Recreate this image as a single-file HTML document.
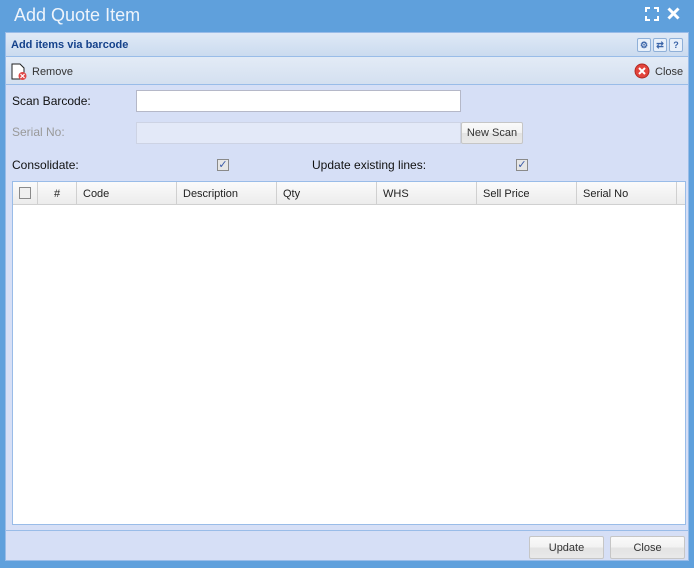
<!DOCTYPE html>
<html><head><style>
*{box-sizing:border-box;margin:0;padding:0}
body{width:694px;height:568px;background:#5fa0dc;font-family:"Liberation Sans",sans-serif;position:relative;overflow:hidden}
.a{position:absolute}
.title{left:14px;top:5px;color:#eef4fb;font-size:18px}
.panel{left:5px;top:32px;width:684px;height:529px;background:#d6dff6;border:1px solid #99bce8}
.ph{left:0;top:0;width:682px;height:24px;background:linear-gradient(#dfe9f6,#cbdbef);border-bottom:1px solid #99bce8}
.tb{left:0;top:24px;width:682px;height:28px;background:linear-gradient(#e3ebf6,#d4e0f0);border-bottom:1px solid #99bce8}
.lbl{font-size:12px;color:#111}
.inp{background:#fff;border:1px solid #b5b8c8}
.btn{border:1px solid #c6c6c6;border-radius:2px;background:linear-gradient(#fafafa 0%,#f2f2f2 50%,#e3e3e3 51%,#e9e9e9);font-size:11px;color:#333;text-align:center}
.cb{width:12px;height:12px;border:1px solid #8a8a8a;background:#e6e6e6;font-size:11px;line-height:10px;text-align:center;color:#3a5aa8}
.grid{left:6px;top:148px;width:674px;height:344px;background:#fff;border:1px solid #99bce8}
.gh{left:0;top:0;width:672px;height:23px;background:linear-gradient(#fbfbfb,#ececec);border-bottom:1px solid #d0d0d0}
.c{position:absolute;top:0;height:22px;border-right:1px solid #d0d0d0;font-size:11px;line-height:24px;padding-left:6px;color:#222}
.ti{width:14px;height:14px;border:1px solid #8fb0d8;border-radius:2px;background:#e8f0fa;font-size:9px;line-height:12px;text-align:center;color:#3a64a8;font-weight:bold;top:5px}
</style></head><body>
<div class="a title">Add Quote Item</div>
<svg class="a" style="left:645px;top:7px" width="14" height="14" viewBox="0 0 14 14" fill="none" stroke="#fff" stroke-width="2"><path d="M1 5V1h4M9 1h4v4M13 9v4H9M5 13H1V9"/></svg>
<svg class="a" style="left:667px;top:7px" width="13" height="13" viewBox="0 0 13 13" stroke="#fff" stroke-width="3"><path d="M1.5 1.5l10 10M11.5 1.5l-10 10"/></svg>
<div class="a panel">
 <div class="a ph"><div class="a" style="left:5px;top:6px;font-size:11px;font-weight:bold;color:#15428b">Add items via barcode</div>
  <div class="a ti" style="left:631px">⚙</div><div class="a ti" style="left:647px">⇄</div><div class="a ti" style="left:663px">?</div></div>
 <div class="a tb">
  <svg class="a" style="left:5px;top:6px" width="18" height="18" viewBox="0 0 18 18"><path d="M1 1h8l4 4v11H1z" fill="#fff" stroke="#222"/><circle cx="11.5" cy="13" r="4" fill="#e04848"/><path d="M9.5 11l4 4M13.5 11l-4 4" stroke="#fff" stroke-width="1.2"/></svg>
  <div class="a" style="left:26px;top:9px;font-size:11px;color:#333">Remove</div>
  <svg class="a" style="left:628px;top:6px" width="16" height="16" viewBox="0 0 16 16"><circle cx="8" cy="8" r="7" fill="#e2443c" stroke="#b02820"/><path d="M5 5l6 6M11 5l-6 6" stroke="#fff" stroke-width="2"/></svg>
  <div class="a" style="left:649px;top:9px;font-size:11px;color:#333">Close</div>
 </div>
 <div class="a lbl" style="left:6px;top:61px">Scan Barcode:</div>
 <div class="a inp" style="left:130px;top:57px;width:325px;height:22px"></div>
 <div class="a lbl" style="left:6px;top:92px;color:#999">Serial No:</div>
 <div class="a inp" style="left:130px;top:89px;width:325px;height:22px;background:#e3e9f8;border-color:#cdd3e4"></div>
 <div class="a btn" style="left:455px;top:89px;width:62px;height:22px;line-height:21px">New Scan</div>
 <div class="a lbl" style="left:6px;top:125px">Consolidate:</div>
 <div class="a cb" style="left:211px;top:126px">✓</div>
 <div class="a lbl" style="left:306px;top:125px">Update existing lines:</div>
 <div class="a cb" style="left:510px;top:126px">✓</div>
 <div class="a grid"><div class="a gh">
  <div class="c" style="left:0;width:25px"><div class="cb" style="margin-top:5px;margin-left:0px;background:#f0f0f0"></div></div>
  <div class="c" style="left:25px;width:39px;padding-left:16px">#</div>
  <div class="c" style="left:64px;width:100px">Code</div>
  <div class="c" style="left:164px;width:100px">Description</div>
  <div class="c" style="left:264px;width:100px">Qty</div>
  <div class="c" style="left:364px;width:100px">WHS</div>
  <div class="c" style="left:464px;width:100px">Sell Price</div>
  <div class="c" style="left:564px;width:100px">Serial No</div>
 </div></div>
 <div class="a" style="left:0;top:497px;width:682px;height:1px;background:#99bce8"></div>
 <div class="a btn" style="left:523px;top:503px;width:75px;height:23px;line-height:23px">Update</div>
 <div class="a btn" style="left:604px;top:503px;width:75px;height:23px;line-height:23px">Close</div>
</div>
</body></html>
